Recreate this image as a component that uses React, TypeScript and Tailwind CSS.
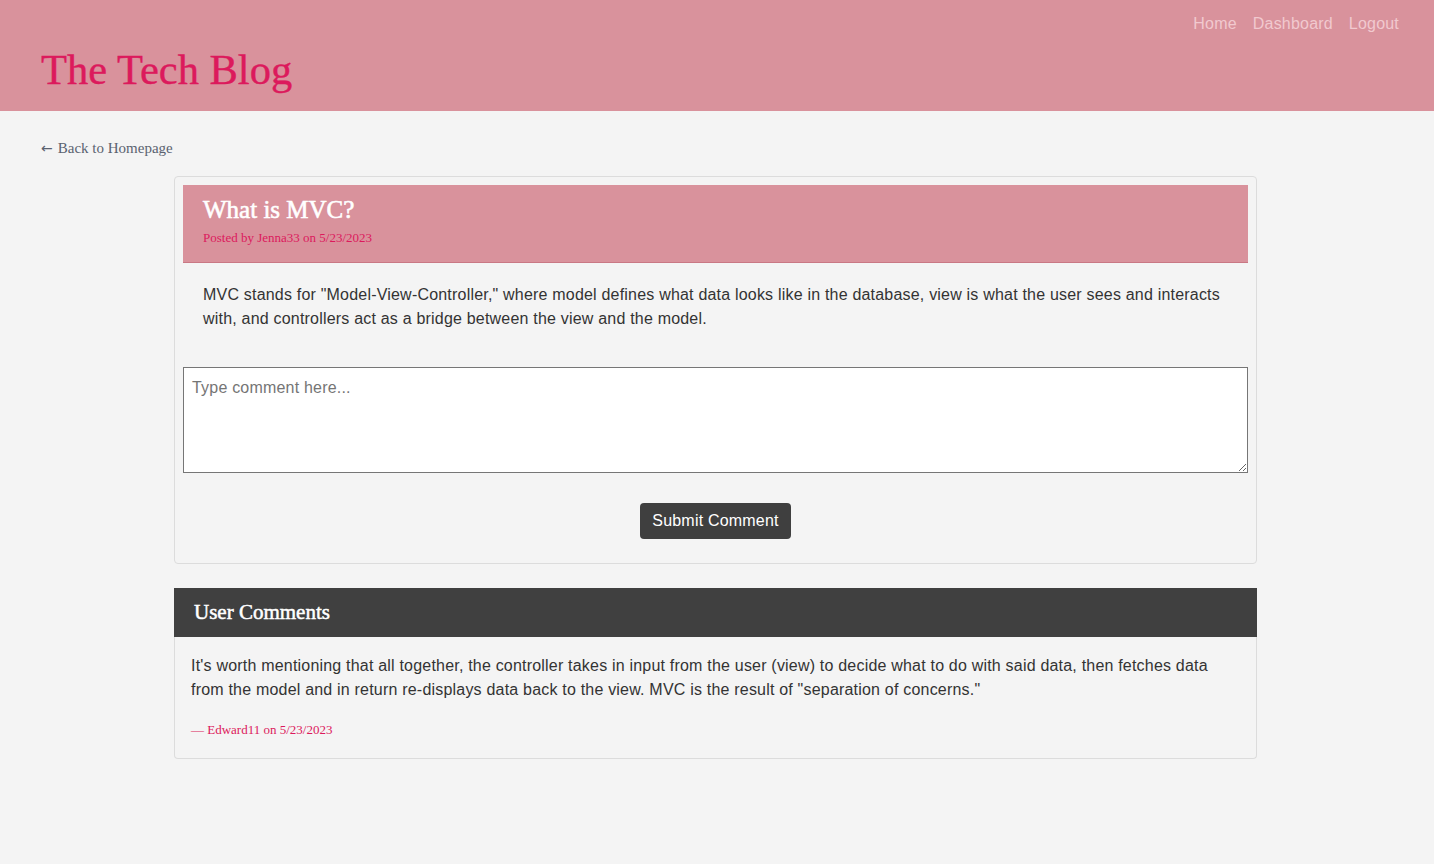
import React from "react";

const serif = { fontFamily: '"Liberation Serif", "DejaVu Serif", serif' };
const sans = { fontFamily: '"Liberation Sans", Arial, Helvetica, sans-serif' };

export default function App() {
  return (
    <div className="min-h-[864px] bg-[#f4f4f4]" style={sans}>
      <header className="h-[111px] bg-[#d9929c] flex justify-between pl-[41px] pr-[35px]">
        <h1
          className="text-[42.5px] leading-none text-[#dc1a5c] pt-[49px] [-webkit-text-stroke:0.4px_#dc1a5c]"
          style={serif}
        >
          The Tech Blog
        </h1>
        <nav className="flex gap-4 pt-[14px] text-[16px] leading-[20px] tracking-[0.2px] text-[#f1c9cf]">
          <a>Home</a>
          <a>Dashboard</a>
          <a>Logout</a>
        </nav>
      </header>

      <div className="px-[41px] pt-[28px] text-[15px] leading-[18px] text-[#5a6270]" style={serif}>
        <a className="flex items-center gap-[5px]">
          <span className="text-[14px]" style={{ fontFamily: '"DejaVu Sans", sans-serif' }}>←</span>
          <span>Back to Homepage</span>
        </a>
      </div>

      <main className="w-[1083px] ml-[174px] mt-[19px]">
        <section className="border border-[#dcdcdc] rounded-[4px] p-[8px] pb-[24px]">
          <div className="bg-[#d9929c] border-b border-[#c97884] px-[20px] pt-[10px] pb-[16px]">
            <h2
              className="text-[25px] leading-[30px] text-white [-webkit-text-stroke:0.6px_white]"
              style={serif}
            >
              What is MVC?
            </h2>
            <p className="text-[13px] leading-[16px] mt-[5px] text-[#dc1a5c]" style={serif}>
              Posted by Jenna33 on 5/23/2023
            </p>
          </div>
          <p className="px-[20px] pt-[20px] text-[16px] leading-[24px] tracking-[0.2px] text-[#333]">
            MVC stands for "Model-View-Controller," where model defines what data looks like in the database, view is what the user sees and interacts with, and controllers act as a bridge between the view and the model.
          </p>
          <textarea
            className="block w-full h-[106px] mt-[36px] bg-white border border-[#767676] px-[8px] py-[10px] text-[16px] leading-[20px] tracking-[0.2px] text-[#333] placeholder:text-[#757575]"
            placeholder="Type comment here..."
          />
          <div className="flex justify-center mt-[30px]">
            <button className="h-[36px] w-[151px] bg-[#3f3f3f] text-white text-[16px] tracking-[0.2px] rounded-[4px]">
              Submit Comment
            </button>
          </div>
        </section>

        <section className="mt-[24px]">
          <div className="h-[49px] bg-[#404040] px-[20px] flex items-center">
            <h3
              className="text-[21px] text-white [-webkit-text-stroke:0.5px_white]"
              style={serif}
            >
              User Comments
            </h3>
          </div>
          <div className="border border-t-0 border-[#dcdcdc] rounded-b-[4px] px-[16px] pt-[17px] pb-[20px]">
            <p className="text-[16px] leading-[24px] tracking-[0.2px] text-[#333]">
              It's worth mentioning that all together, the controller takes in input from the user (view) to decide what to do with said data, then fetches data from the model and in return re-displays data back to the view. MVC is the result of "separation of concerns."
            </p>
            <p className="text-[13px] leading-[16px] mt-[20px] text-[#dc1a5c]" style={serif}>
              — Edward11 on 5/23/2023
            </p>
          </div>
        </section>
      </main>
    </div>
  );
}
